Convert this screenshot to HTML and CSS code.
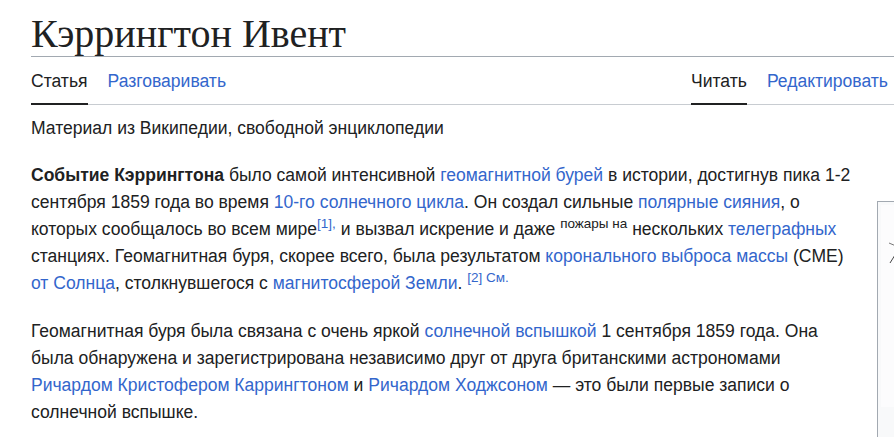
FILE: index.html
```html
<!DOCTYPE html>
<html lang="ru">
<head>
  <meta charset="UTF-8">
  <title>Кэррингтон Ивент</title>
  <link rel="stylesheet" href="styles.css">
</head>
<body>
  <div class="page">
    <h1 class="title">Кэррингтон Ивент</h1>

    <nav class="tabs">
      <div class="tab-group">
        <a class="tab active">Статья</a>
        <a class="tab" href="#">Разговаривать</a>
      </div>
      <div class="tab-group right">
        <a class="tab active">Читать</a>
        <a class="tab" href="#">Редактировать</a>
      </div>
    </nav>

    <div class="tagline">Материал из Википедии, свободной энциклопедии</div>

    <div class="content">
      <div class="infobox">
        <div class="infobox-image">
          <svg width="20" height="30" viewBox="0 0 20 30">
            <path d="M2 4 L9 7" stroke="#777" stroke-width="1" fill="none"/>
            <path d="M3 24 L8 16" stroke="#444" stroke-width="1" fill="none"/>
          </svg>
        </div>
      </div>

      <p><b>Событие Кэррингтона</b> было самой интенсивной <a href="#">геомагнитной бурей</a> в истории, достигнув пика 1-2 сентября 1859 года во время <a href="#">10-го солнечного цикла</a>. Он создал сильные <a href="#">полярные сияния</a>, о которых сообщалось во всем мире<sup><a href="#">[1],</a></sup> и вызвал искрение и даже <sup>пожары на</sup> нескольких <a href="#">телеграфных</a> станциях. Геомагнитная буря, скорее всего, была результатом <a href="#">коронального выброса массы</a> (CME) <a href="#">от Солнца</a>, столкнувшегося с <a href="#">магнитосферой Земли</a>. <sup><a href="#">[2] См.</a></sup></p>

      <p>Геомагнитная буря была связана с очень яркой <a href="#">солнечной вспышкой</a> 1 сентября 1859 года. Она была обнаружена и зарегистрирована независимо друг от друга британскими астрономами <a href="#">Ричардом Кристофером Каррингтоном</a> и <a href="#">Ричардом Ходжсоном</a> — это были первые записи о солнечной вспышке.</p>
    </div>
  </div>
</body>
</html>
```

FILE: styles.css
```css
html, body {
  overflow: hidden;
}

body {
  margin: 0;
  background: #fff;
  color: #202122;
  font-family: "Liberation Sans", Arial, sans-serif;
  font-size: 17.55px;
}

a {
  color: #3366cc;
  text-decoration: none;
}

.page {
  width: 863px;
  padding-left: 31px;
}

/* заголовок */
.title {
  margin: 0;
  padding-top: 14px;
  padding-bottom: 2px;
  font-family: "Liberation Serif", "Times New Roman", serif;
  font-weight: normal;
  font-size: 40px;
  line-height: 40px;
  border-bottom: 1px solid #a2a9b1;
}

/* вкладки */
.tabs {
  display: flex;
  padding-right: 6px;
  border-bottom: 1px solid #c8ccd1;
}

.tab-group {
  display: flex;
  gap: 20px;
}

.tab-group.right {
  margin-left: auto;
}

.tab {
  display: block;
  padding-top: 14px;
  padding-bottom: 11px;
  line-height: 21px;
  margin-bottom: -1px;
  border-bottom: 2px solid transparent;
}

.tab.active {
  color: #202122;
  border-bottom-color: #202122;
}

.tagline {
  margin-top: 11px;
  line-height: 24px;
}

/* текст статьи */
.content p {
  margin: 21px 0 0;
  line-height: 27px;
}

.content p:first-of-type {
  margin-top: 22px;
}

sup {
  font-size: 13.5px;
  line-height: 1;
}

.infobox {
  float: right;
  width: 300px;
  margin: 39px -291px 0 14px;
  height: 260px;
  padding: 3px;
  background: #f8f9fa;
  border: 1px solid #a2a9b1;
}

.infobox-image {
  height: 202px;
  background: #fcfcfd;
  padding: 34px 0 0 6px;
  box-sizing: border-box;
}
```
